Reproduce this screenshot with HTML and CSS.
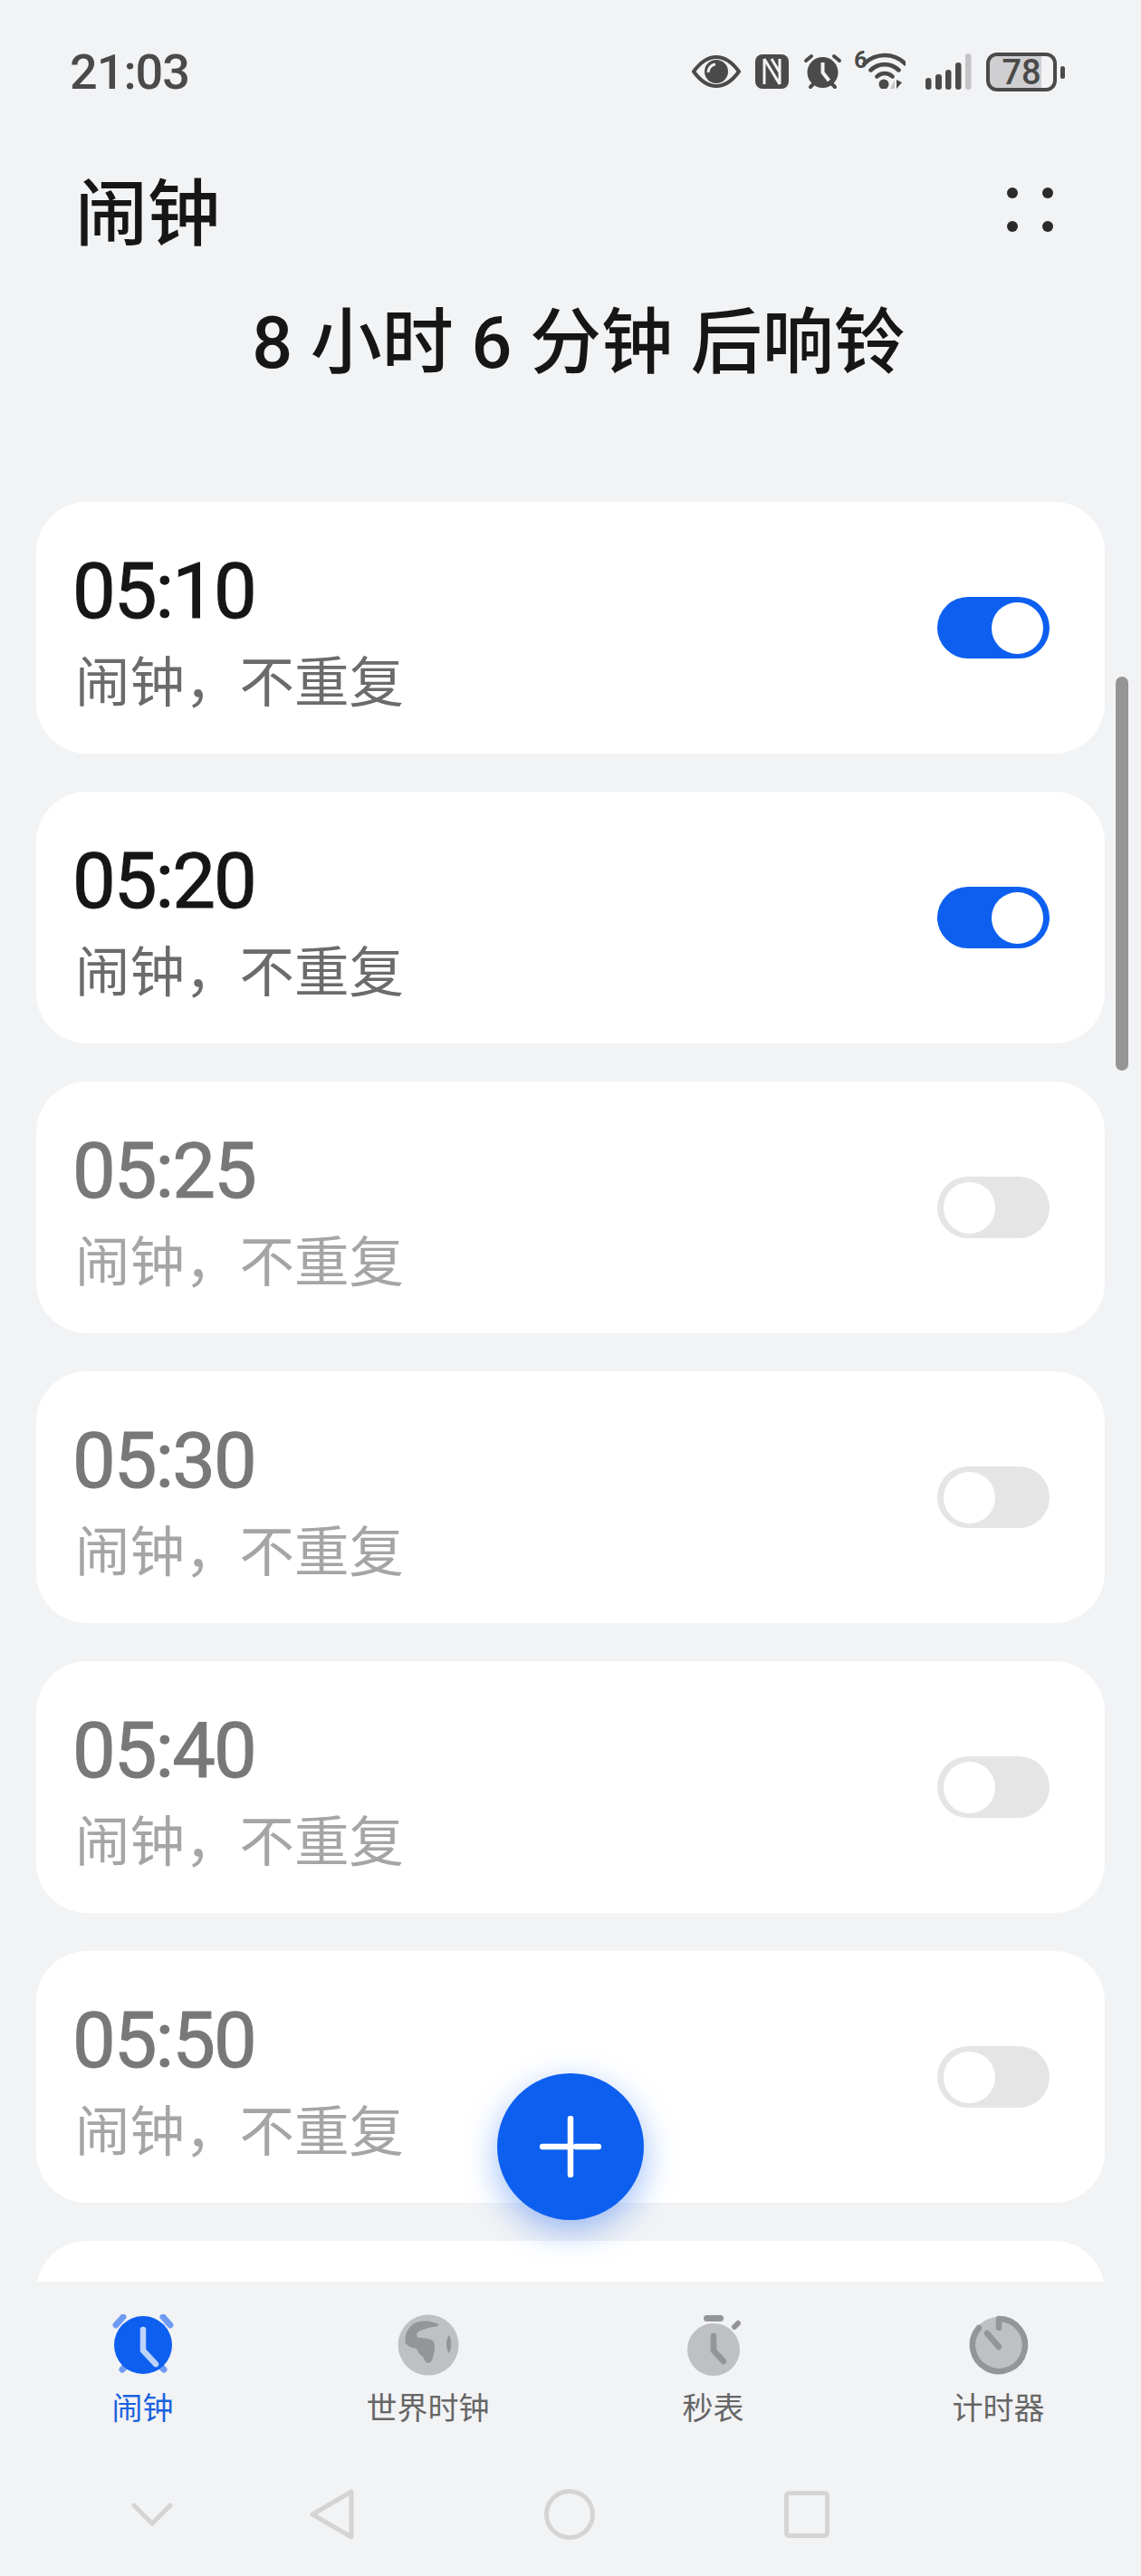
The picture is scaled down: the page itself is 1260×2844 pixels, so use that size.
FILE: index.html
```html
<!DOCTYPE html>
<html lang="zh-CN">
<head>
  <meta charset="UTF-8" />
  <meta name="viewport" content="width=device-width, initial-scale=1" />
  <title>闹钟</title>
  <link rel="stylesheet" href="styles.css">
</head>
<body>

<!-- Status bar -->
<div class="status-bar">
  <span class="status-time">21:03</span>
  <div class="status-icons">
    <svg class="ic-eye" width="54" height="36" viewBox="0 0 54 36">
      <path d="M2 18C10 7 18 2 27 2s17 5 25 16c-8 11-16 16-25 16S10 29 2 18z" fill="none" stroke="#4a4a4a" stroke-width="4"/>
      <circle cx="27" cy="18" r="13" fill="#4a4a4a"/>
      <path d="M18 19a9 9 0 0 1 8-9" fill="none" stroke="#f2f3f5" stroke-width="3"/>
    </svg>
    <svg class="ic-nfc" width="37" height="38" viewBox="0 0 37 38">
      <rect width="37" height="38" rx="8" fill="#4a4a4a"/>
      <path d="M10 5v28M10 5l17 28M27 5v28M18 5l9 15" fill="none" stroke="#f2f3f5" stroke-width="3"/>
    </svg>
    <svg class="ic-alarm" width="43" height="40" viewBox="0 0 43 40">
      <circle cx="21.5" cy="21" r="17" fill="#4a4a4a"/>
      <path d="M3 8l6-5M40 8l-6-5M8 37l3-3M35 37l-3-3" stroke="#4a4a4a" stroke-width="4" stroke-linecap="round"/>
      <path d="M21.5 10v11l7 9" fill="none" stroke="#f2f3f5" stroke-width="4"/>
    </svg>
    <svg class="ic-wifi" width="57" height="48" viewBox="0 -6 57 48">
      <text class="wifi-six" x="0" y="19">6</text>
      <path d="M11.400 14.400A32 32 0 0 1 56.600 14.400M18.500 21.500A22 22 0 0 1 49.500 21.500M25.500 28.500A12 12 0 0 1 42.500 28.500" fill="none" stroke="#4a4a4a" stroke-width="4.600" stroke-linecap="round"/>
      <circle cx="33" cy="37" r="5.500" fill="#4a4a4a"/>
      <path d="M40 42l5-10v10z" fill="#c6c6c8"/>
      <path d="M47 32v10l6-7z" fill="#4a4a4a"/>
    </svg>
    <svg class="ic-signal" width="51" height="40" viewBox="0 0 51 40">
      <rect x="0" y="27" width="6.5" height="13" rx="3.2" fill="#4a4a4a"/>
      <rect x="11" y="23" width="7" height="17" rx="3.2" fill="#4a4a4a"/>
      <rect x="22" y="18" width="6.5" height="22" rx="3.2" fill="#4a4a4a"/>
      <rect x="33" y="10" width="6.5" height="30" rx="3.2" fill="#4a4a4a"/>
      <rect x="44" y="0" width="6.5" height="40" rx="3.2" fill="#c4c4c6"/>
    </svg>
    <svg class="ic-battery" width="87" height="43" viewBox="0 0 87 43">
      <path d="M11 2h50v39H11a9 9 0 0 1-9-9V11a9 9 0 0 1 9-9z" fill="#cfcfd1"/>
      <rect x="2" y="2" width="74" height="39" rx="10" fill="none" stroke="#4a4a4a" stroke-width="4"/>
      <rect x="82" y="15" width="5" height="14" rx="2.5" fill="#4a4a4a"/>
      <text class="battery-num" x="39" y="35" text-anchor="middle">78</text>
    </svg>
  </div>
</div>

<!-- Title -->
<div class="top-bar">
  <h1>闹钟</h1>
  <div class="menu-dots"><i></i><i></i><i></i><i></i></div>
</div>
<div class="next-ring">8 小时 6 分钟 后响铃</div>

<!-- Alarm list -->
<div class="alarm-list">
  <div class="alarm">
    <div class="alarm-text"><div class="alarm-time">05:10</div><div class="alarm-sub">闹钟，不重复</div></div>
    <div class="switch on"></div>
  </div>
  <div class="alarm">
    <div class="alarm-text"><div class="alarm-time">05:20</div><div class="alarm-sub">闹钟，不重复</div></div>
    <div class="switch on"></div>
  </div>
  <div class="alarm off">
    <div class="alarm-text"><div class="alarm-time">05:25</div><div class="alarm-sub">闹钟，不重复</div></div>
    <div class="switch"></div>
  </div>
  <div class="alarm off">
    <div class="alarm-text"><div class="alarm-time">05:30</div><div class="alarm-sub">闹钟，不重复</div></div>
    <div class="switch"></div>
  </div>
  <div class="alarm off">
    <div class="alarm-text"><div class="alarm-time">05:40</div><div class="alarm-sub">闹钟，不重复</div></div>
    <div class="switch"></div>
  </div>
  <div class="alarm off">
    <div class="alarm-text"><div class="alarm-time">05:50</div><div class="alarm-sub">闹钟，不重复</div></div>
    <div class="switch"></div>
  </div>
  <div class="alarm off"></div>
</div>

<div class="scroll-thumb"></div>

<button class="add-btn" title="添加闹钟">
  <svg width="68" height="68" viewBox="0 0 68 68">
    <path d="M3 34h30M40 34h25M34 3v62" fill="none" stroke="#fff" stroke-width="6.5" stroke-linecap="round"/>
  </svg>
</button>

<!-- Tabs -->
<div class="tabs">
  <div class="tab active">
    <svg width="70" height="68" viewBox="0 0 70 68">
      <path d="M5 12l8-9M65 12l-8-9" stroke="#6f9bf3" stroke-width="7" stroke-linecap="round"/>
      <path d="M12 61l3-3M58 61l-3-3" stroke="#6f9bf3" stroke-width="7" stroke-linecap="round"/>
      <circle cx="35" cy="34" r="32" fill="#0d5ff0"/>
      <path d="M35 17v23l14 15" fill="none" stroke="#bcd3fb" stroke-width="6.5" stroke-linecap="round" stroke-linejoin="round"/>
    </svg>
    <span>闹钟</span>
  </div>
  <div class="tab">
    <svg width="70" height="68" viewBox="0 0 70 68">
      <circle cx="35" cy="34" r="33.5" fill="#bfc0c2"/>
      <path d="M9.500 27C10 18 16 10 25 8c8-1.500 15 0 21 3 1 2-2 3-7 3-5 1-10 3-15 5-3 3-2 7 1 7 5 0 12 1 15 3 2 4 3 10 1 15-1 6-3 10-6 10-3 0-4-4-6-7-3-2-6-6-7-9-4-1-9-2-12.500-6z" fill="#949597"/>
      <path d="M58 23c3 5 3 15 0 20-2-2-3-6-3-10s1-8 3-10z" fill="#949597"/>
    </svg>
    <span>世界时钟</span>
  </div>
  <div class="tab">
    <svg width="70" height="68" viewBox="0 0 70 68">
      <circle cx="35" cy="39" r="29" fill="#bfc0c2"/>
      <rect x="24" y="1" width="22" height="7" rx="3.5" fill="#949597"/>
      <path d="M58 14l4-4" stroke="#949597" stroke-width="6" stroke-linecap="round"/>
      <path d="M35 24v16l11 12" fill="none" stroke="#949597" stroke-width="6.5" stroke-linecap="round" stroke-linejoin="round"/>
    </svg>
    <span>秒表</span>
  </div>
  <div class="tab">
    <svg width="70" height="68" viewBox="0 0 70 68">
      <circle cx="35" cy="34" r="31" fill="#bfc0c2"/>
      <path d="M35 15V5a29 29 0 1 1-22 10" fill="none" stroke="#949597" stroke-width="6.5" stroke-linecap="round" stroke-linejoin="round"/>
      <path d="M22 21l13 15" fill="none" stroke="#949597" stroke-width="6.5" stroke-linecap="round"/>
    </svg>
    <span>计时器</span>
  </div>
</div>

<!-- System navigation -->
<div class="sys-nav">
  <svg class="nav-hide" width="46" height="26" viewBox="0 0 46 26">
    <path d="M3 3l20 20L43 3" fill="none" stroke="#d4d4d4" stroke-width="5" stroke-linecap="round"/>
  </svg>
  <svg class="nav-back" width="50" height="56" viewBox="0 0 50 56">
    <path d="M46 3v50L3 28z" fill="none" stroke="#d4d4d4" stroke-width="5" stroke-linejoin="round"/>
  </svg>
  <svg class="nav-home" width="56" height="56" viewBox="0 0 56 56">
    <circle cx="28" cy="28" r="25.500" fill="none" stroke="#d4d4d4" stroke-width="5"/>
  </svg>
  <svg class="nav-recent" width="50" height="52" viewBox="0 0 50 52">
    <rect x="2.500" y="2.500" width="45" height="47" rx="3" fill="none" stroke="#d4d4d4" stroke-width="5"/>
  </svg>
</div>

</body>
</html>
```

FILE: styles.css
```css
:root {
  --bg: #f2f3f5;
  --blue: #0d5ff0;
  --text: #161616;
}

* {
  box-sizing: border-box;
}

html, body {
  height: 2844px;
}

body {
  margin: 0;
  position: relative;
  display: flex;
  flex-direction: column;
  overflow: hidden;
  background: var(--bg);
  color: var(--text);
  font-family: Roboto, "Noto Sans CJK SC", sans-serif;
}

/* status bar */
.status-bar {
  flex: none;
  height: 158px;
  padding: 0 84px 0 77px;
  display: flex;
  align-items: center;
  justify-content: space-between;
}

.status-time {
  font-size: 54px;
  font-weight: 500;
  letter-spacing: -1px;
  color: #4a4a4a;
}

.status-icons {
  display: flex;
  align-items: center;
  gap: 16px;
}

.ic-wifi {
  margin: 0 0 10px -3px;
}

.ic-signal {
  margin-left: 6px;
}

.wifi-six {
  font-size: 26px;
  font-weight: 700;
  fill: #4a4a4a;
}

.battery-num {
  font-size: 38px;
  font-weight: 500;
  fill: #4a4a4a;
}

/* title */
.top-bar {
  flex: none;
  height: 150px;
  padding: 8px 97px 0 83px;
  display: flex;
  align-items: center;
  justify-content: space-between;
}

h1 {
  margin: 0;
  font-size: 80px;
  font-weight: 500;
  line-height: 1;
}

.menu-dots {
  display: grid;
  grid-template-columns: 12px 12px;
  gap: 25px 27px;
  margin-top: -11px;
}

.menu-dots i {
  width: 12px;
  height: 12px;
  border-radius: 50%;
  background: #2b2b2b;
}

.next-ring {
  flex: none;
  height: 140px;
  margin: -7px 0 113px;
  padding-left: 18px;
  display: flex;
  align-items: center;
  justify-content: center;
  font-size: 79px;
  font-weight: 500;
  white-space: pre;
}

/* list */
.alarm-list {
  flex: none;
  height: 1965px;
  padding: 0 40px;
  display: flex;
  flex-direction: column;
  gap: 42px;
  overflow: hidden;
}

.alarm {
  flex: none;
  height: 278px;
  padding: 0 61px 0 40px;
  display: flex;
  align-items: center;
  justify-content: space-between;
  background: #fff;
  border-radius: 56px;
}

.alarm-text {
  padding-top: 13px;
}

.alarm-time {
  font-size: 85px;
  font-weight: 400;
  line-height: 98px;
  letter-spacing: -2px;
  -webkit-text-stroke: 1px currentColor;
}

.alarm-sub {
  margin: 13px 0 0 3px;
  font-size: 60.500px;
  line-height: 80px;
  color: #6b6b6b;
}

.alarm.off .alarm-time {
  color: #787878;
}

.alarm.off .alarm-sub {
  color: #a5a5a5;
}

.switch {
  width: 124px;
  height: 68px;
  padding: 5.500px 7px;
  display: flex;
  border-radius: 34px;
  background: #e5e5e5;
}

.switch::after {
  content: "";
  width: 57px;
  height: 57px;
  border-radius: 50%;
  background: #fff;
}

.switch.on {
  justify-content: flex-end;
  background: var(--blue);
}

.scroll-thumb {
  position: absolute;
  left: 1232px;
  top: 747px;
  width: 14px;
  height: 435px;
  border-radius: 7px;
  background: #959595;
}

.add-btn {
  position: absolute;
  left: 549px;
  top: 2289px;
  width: 162px;
  height: 162px;
  padding: 0;
  display: flex;
  align-items: center;
  justify-content: center;
  border: none;
  border-radius: 50%;
  background: var(--blue);
  box-shadow: 0 12px 36px rgba(13, 95, 240, 0.4);
}

/* tabs */
.tabs {
  flex: none;
  height: 205px;
  padding-top: 36px;
  display: grid;
  grid-template-columns: repeat(4, 315px);
}

.tab {
  display: flex;
  flex-direction: column;
  align-items: center;
  font-size: 34px;
  line-height: 40px;
  color: #666;
}

.tab span {
  margin-top: 16px;
}

.tab.active {
  color: #1a62e0;
}

/* system nav */
.sys-nav {
  flex: none;
  height: 120px;
  padding: 0 0 16px 145px;
  display: flex;
  align-items: center;
}

.nav-back {
  margin-left: 151px;
}

.nav-home,
.nav-recent {
  margin-left: 209px;
}
```
